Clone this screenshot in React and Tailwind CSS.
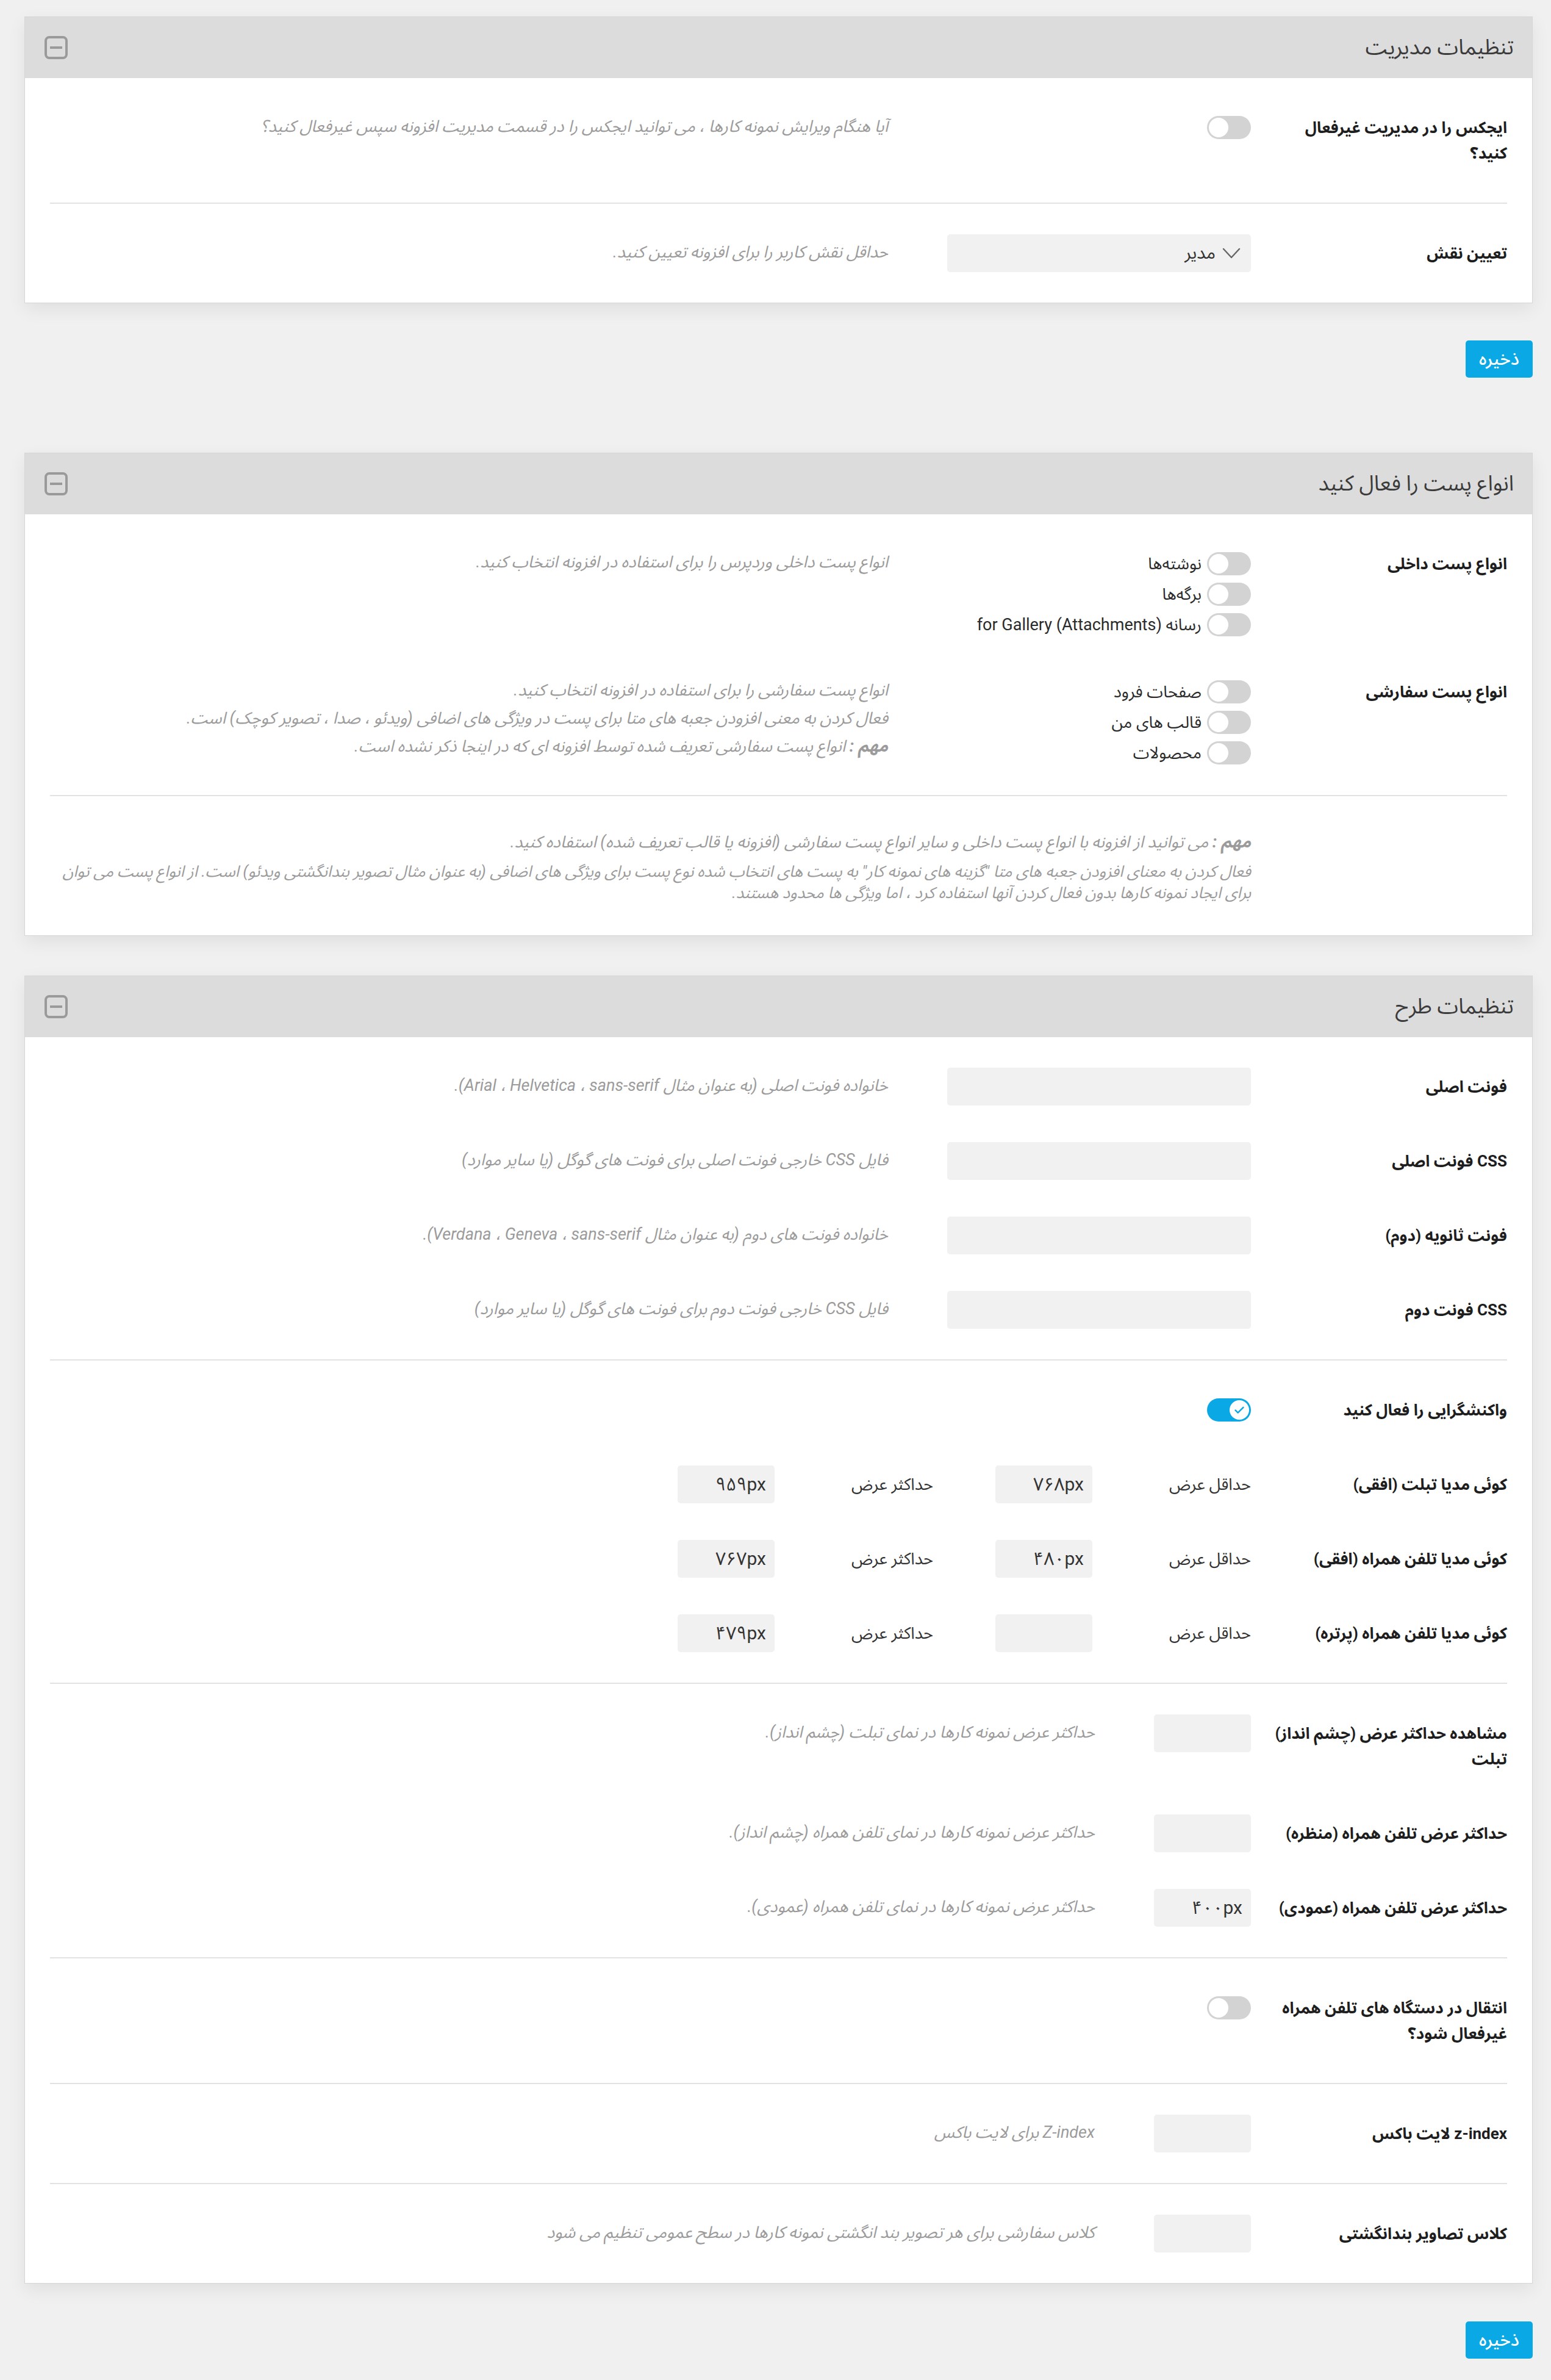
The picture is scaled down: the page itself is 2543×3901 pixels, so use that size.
import React from 'react';

const LABEL = 'w-[420px] shrink-0 py-[10px] text-[26px] font-bold leading-[42px] text-[#1e1e1e]';
const DESC = 'mr-[97px] pt-[8px] text-[27px] italic leading-[42px] text-[#9b9b9b]';

const MinusIcon = () => (
  <div className="flex h-[38px] w-[38px] items-center justify-center rounded-[8px] border-[4px] border-[#9a9a9a]">
    <div className="h-[4px] w-[20px] bg-[#9a9a9a]" />
  </div>
);

const Toggle = ({ on }) => (
  <div
    dir="ltr"
    className={
      on
        ? 'flex h-[38px] w-[72px] shrink-0 items-center justify-end rounded-full bg-[#0aa8e4] p-[3px]'
        : 'flex h-[38px] w-[72px] shrink-0 items-center justify-start rounded-full bg-[#d3d3d3] p-[3px]'
    }
  >
    <div className="flex h-[32px] w-[32px] items-center justify-center rounded-full bg-white">
      {on && (
        <svg width="22" height="22" viewBox="0 0 24 24" fill="none">
          <path d="M5 12.5l4.5 4.5L19 7.5" stroke="#0aa8e4" strokeWidth="2.6" strokeLinecap="round" strokeLinejoin="round" />
        </svg>
      )}
    </div>
  </div>
);

const TextInput = ({ value = '' }) => (
  <input
    type="text"
    defaultValue={value}
    className="h-[62px] w-[498px] shrink-0 rounded-[5px] bg-[#f1f1f1] px-[14px] text-right text-[29px] text-[#333] outline-none"
  />
);

const SmallInput = ({ value = '' }) => (
  <input
    type="text"
    defaultValue={value}
    className="h-[62px] w-[159px] shrink-0 rounded-[5px] bg-[#f1f1f1] px-[14px] text-right text-[30px] text-[#333] outline-none"
  />
);

// labels are given line by line so they break where the reference breaks
const Label = ({ lines }) => (
  <div className={LABEL}>
    {[].concat(lines).map((line) => (
      <div key={line} className="whitespace-nowrap">
        {line}
      </div>
    ))}
  </div>
);

const Row = ({ label, children, desc }) => (
  <div className="flex items-start">
    <Label lines={label} />
    <div className="shrink-0">{children}</div>
    {desc && <div className={DESC}>{desc}</div>}
  </div>
);

const Group = ({ children, first }) => (
  <div className={first ? 'flex flex-col gap-[60px] py-[50px]' : 'flex flex-col gap-[60px] border-t-2 border-[#e2e2e2] py-[50px]'}>
    {children}
  </div>
);

const Panel = ({ title, children }) => (
  <section className="border border-[#d6d6d6] bg-white shadow-[0_10px_28px_rgba(0,0,0,0.07)]">
    <header className="flex h-[100px] items-center justify-between bg-[#dcdcdc] pr-[30px] pl-[32px]">
      <h2 className="text-[35px] font-normal text-[#3b3b3b]">{title}</h2>
      <MinusIcon />
    </header>
    <div className="px-[41px]">{children}</div>
  </section>
);

const SaveButton = () => (
  <div className="flex">
    <button type="button" className="h-[61px] w-[110px] rounded-[5px] bg-[#0aa8e4] text-[29px] font-medium text-white">
      ذخیره
    </button>
  </div>
);

const ToggleBox = ({ on }) => (
  <div className="flex h-[62px] w-[498px] items-center">
    <Toggle on={on} />
  </div>
);

const ToggleList = ({ items }) => (
  <div className="flex w-[498px] flex-col gap-[12px] pt-[12px]">
    {items.map((item) => (
      <div key={item} className="flex h-[38px] items-center gap-[9px]">
        <Toggle />
        <span className="text-[27px] leading-[38px] text-[#2b2b2b]">{item}</span>
      </div>
    ))}
  </div>
);

const MediaRow = ({ label, min, max }) => (
  <Row label={label}>
    <div className="flex items-center text-[27px] text-[#333]">
      <span className="w-[260px] shrink-0">حداقل عرض</span>
      <SmallInput value={min} />
      <span className="mr-[102px] w-[260px] shrink-0">حداکثر عرض</span>
      <SmallInput value={max} />
    </div>
  </Row>
);

const Select = () => (
  <div className="flex h-[62px] w-[498px] items-center gap-[10px] rounded-[5px] bg-[#f1f1f1] pr-[16px] text-[29px] text-[#333]">
    <svg width="32" height="20" viewBox="0 0 32 20" fill="none">
      <path d="M3 3l13 14L29 3" stroke="#666" strokeWidth="2.4" strokeLinecap="round" strokeLinejoin="round" />
    </svg>
    <span>مدیر</span>
  </div>
);

export default function App() {
  return (
    <div
      dir="rtl"
      className="min-h-screen bg-[#f0f0f0] pt-[27px] pr-[30px] pb-[37px] pl-[40px] font-['Roboto','Noto_Sans_Arabic','DejaVu_Sans',sans-serif]"
    >
      <Panel title="تنظیمات مدیریت">
        <Group first>
          <Row
            label={['ایجکس را در مدیریت غیرفعال', 'کنید؟']}
            desc="آیا هنگام ویرایش نمونه کارها ، می توانید ایجکس را در قسمت مدیریت افزونه سپس غیرفعال کنید؟"
          >
            <ToggleBox />
          </Row>
        </Group>
        <Group>
          <Row label="تعیین نقش" desc="حداقل نقش کاربر را برای افزونه تعیین کنید.">
            <Select />
          </Row>
        </Group>
      </Panel>

      <div className="mt-[61px]">
        <SaveButton />
      </div>

      <div className="mt-[123px]">
        <Panel title="انواع پست را فعال کنید">
          <Group first>
            <div className="flex items-start">
              <Label lines="انواع پست داخلی" />
              <div className="shrink-0">
                <ToggleList items={['نوشته‌ها', 'برگه‌ها', 'رسانه for Gallery (Attachments)']} />
              </div>
              <div className="mr-[97px] pt-[5px] text-[27px] italic leading-[46px] text-[#9b9b9b]">
                انواع پست داخلی وردپرس را برای استفاده در افزونه انتخاب کنید.
              </div>
            </div>
            <div className="flex items-start">
              <Label lines="انواع پست سفارشی" />
              <div className="shrink-0">
                <ToggleList items={['صفحات فرود', 'قالب های من', 'محصولات']} />
              </div>
              <div className="mr-[97px] pt-[5px] text-[27px] italic leading-[46px] text-[#9b9b9b]">
                <p>انواع پست سفارشی را برای استفاده در افزونه انتخاب کنید.</p>
                <p>فعال کردن به معنی افزودن جعبه های متا برای پست در ویژگی های اضافی (ویدئو ، صدا ، تصویر کوچک) است.</p>
                <p>
                  <b>مهم :</b> انواع پست سفارشی تعریف شده توسط افزونه ای که در اینجا ذکر نشده است.
                </p>
              </div>
            </div>
          </Group>
          <div className="flex border-t-2 border-[#e2e2e2] pt-[54px] pb-[52px]">
            <div className="w-[420px] shrink-0" />
            <div className="flex-1 italic text-[#9b9b9b]">
              <p className="text-[27px] leading-[42px]">
                <b>مهم :</b> می توانید از افزونه با انواع پست داخلی و سایر انواع پست سفارشی (افزونه یا قالب تعریف شده) استفاده کنید.
              </p>
              <p className="mt-[10px] text-[26px] leading-[35px]">
                فعال کردن به معنای افزودن جعبه های متا "گزینه های نمونه کار" به پست های انتخاب شده نوع پست برای ویژگی های اضافی (به عنوان مثال تصویر بندانگشتی ویدئو) است. از انواع پست می توان برای ایجاد نمونه کارها بدون فعال کردن آنها استفاده کرد ، اما ویژگی ها محدود هستند.
              </p>
            </div>
          </div>
        </Panel>
      </div>

      <div className="mt-[65px]">
        <Panel title="تنظیمات طرح">
          <Group first>
            <Row label="فونت اصلی" desc="خانواده فونت اصلی (به عنوان مثال Arial ، Helvetica ، sans-serif).">
              <TextInput />
            </Row>
            <Row label="CSS فونت اصلی" desc="فایل CSS خارجی فونت اصلی برای فونت های گوگل (یا سایر موارد)">
              <TextInput />
            </Row>
            <Row label="فونت ثانویه (دوم)" desc="خانواده فونت های دوم (به عنوان مثال Verdana ، Geneva ، sans-serif).">
              <TextInput />
            </Row>
            <Row label="CSS فونت دوم" desc="فایل CSS خارجی فونت دوم برای فونت های گوگل (یا سایر موارد)">
              <TextInput />
            </Row>
          </Group>
          <Group>
            <Row label="واکنشگرایی را فعال کنید">
              <ToggleBox on />
            </Row>
            <MediaRow label="کوئی مدیا تبلت (افقی)" min="۷۶۸px" max="۹۵۹px" />
            <MediaRow label="کوئی مدیا تلفن همراه (افقی)" min="۴۸۰px" max="۷۶۷px" />
            <MediaRow label="کوئی مدیا تلفن همراه (پرتره)" min="" max="۴۷۹px" />
          </Group>
          <Group>
            <Row label={['مشاهده حداکثر عرض (چشم انداز)', 'تبلت']} desc="حداکثر عرض نمونه کارها در نمای تبلت (چشم انداز).">
              <SmallInput />
            </Row>
            <Row label="حداکثر عرض تلفن همراه (منظره)" desc="حداکثر عرض نمونه کارها در نمای تلفن همراه (چشم انداز).">
              <SmallInput />
            </Row>
            <Row label="حداکثر عرض تلفن همراه (عمودی)" desc="حداکثر عرض نمونه کارها در نمای تلفن همراه (عمودی).">
              <SmallInput value="۴۰۰px" />
            </Row>
          </Group>
          <Group>
            <Row label={['انتقال در دستگاه های تلفن همراه', 'غیرفعال شود؟']}>
              <ToggleBox />
            </Row>
          </Group>
          <Group>
            <Row label="z-index لایت باکس" desc="Z-index برای لایت باکس">
              <SmallInput />
            </Row>
          </Group>
          <Group>
            <Row label="کلاس تصاویر بندانگشتی" desc="کلاس سفارشی برای هر تصویر بند انگشتی نمونه کارها در سطح عمومی تنظیم می شود">
              <SmallInput />
            </Row>
          </Group>
        </Panel>
      </div>

      <div className="mt-[62px]">
        <SaveButton />
      </div>
    </div>
  );
}
